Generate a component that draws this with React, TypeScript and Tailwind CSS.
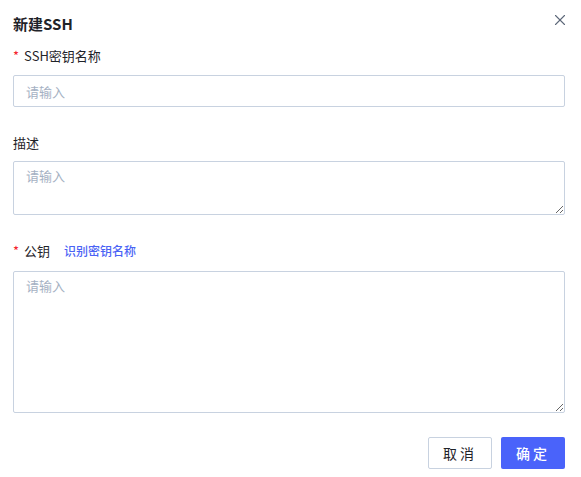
import { X } from 'lucide-react';

const font = { fontFamily: '"Noto Sans CJK SC", "Noto Sans", sans-serif' };

const Req = () => <span className="mr-[5px] text-[13px] text-[#f5222d]">*</span>;

export default function App() {
  return (
    <div className="h-[477px] w-[581px] bg-white text-[#1f2329]" style={font}>
      <div className="flex flex-col pl-[13px] pr-[16px]">
        <div className="flex h-[46px] items-center justify-between">
          <h2 className="text-[15px] font-bold leading-none">新建SSH</h2>
          <X className="mr-[-4px] mt-[-6px] h-[18px] w-[18px] text-[#5c6779]" strokeWidth={1.5} />
        </div>
        <label className="flex h-[19px] items-center text-[13px] leading-none">
          <Req />
          SSH密钥名称
        </label>
        <input
          className="mt-[10px] h-[32px] w-full rounded-[2px] border border-[#c8d2e0] px-[12px] text-[13px] outline-none placeholder:text-[#a5b1c3]"
          placeholder="请输入"
        />
        <label className="mt-[26px] flex h-[19px] items-center text-[13px] leading-none">描述</label>
        <textarea
          className="mt-[9px] h-[54px] w-full rounded-[2px] border border-[#c8d2e0] px-[12px] py-[4px] text-[13px] outline-none placeholder:text-[#a5b1c3]"
          placeholder="请输入"
        />
        <div className="mt-[26px] flex h-[19px] items-center text-[13px] leading-none">
          <Req />
          公钥
          <span className="ml-[14px] text-[12px] font-medium text-[#4a63f5]">识别密钥名称</span>
        </div>
        <textarea
          className="mt-[11px] h-[142px] w-full rounded-[2px] border border-[#c8d2e0] px-[12px] py-[4px] text-[13px] outline-none placeholder:text-[#a5b1c3]"
          placeholder="请输入"
        />
        <div className="mt-[24px] flex justify-end gap-[9px]">
          <button className="h-[32px] w-[64px] rounded-[2px] border border-[#c8d2e0] bg-white text-[14px] tracking-[3px] text-[#1f2329]">
            取消
          </button>
          <button className="h-[32px] w-[64px] rounded-[2px] bg-[#4a63fa] text-[14px] font-medium tracking-[3px] text-white">
            确定
          </button>
        </div>
      </div>
    </div>
  );
}
